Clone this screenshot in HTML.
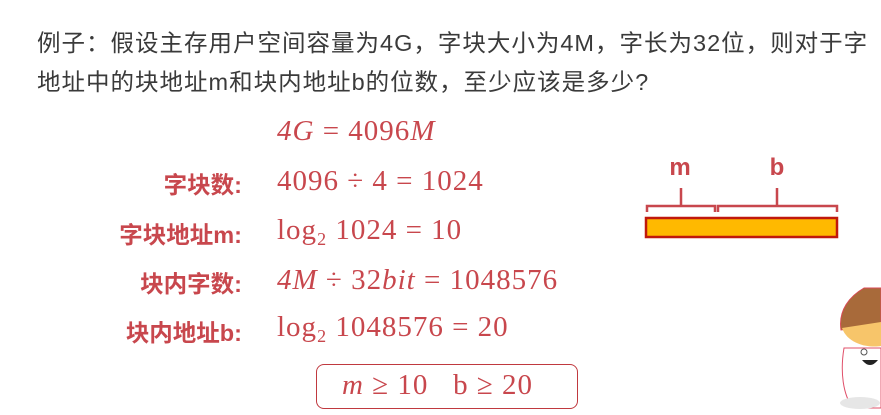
<!DOCTYPE html>
<html><head><meta charset="utf-8"><style>
body{margin:0;width:881px;height:415px;background:#fff;position:relative;overflow:hidden;font-family:"Liberation Sans","Noto Sans CJK SC",sans-serif}
.t{position:absolute;left:37px;font-size:23.5px;letter-spacing:1px;color:#3a3a3a;white-space:nowrap}
.l{position:absolute;right:639px;font-size:23.5px;font-weight:bold;color:#c8474d;white-space:nowrap}
.m{position:absolute;left:277px;font-family:"Liberation Serif","DejaVu Serif",serif;font-size:29px;letter-spacing:1px;color:#c8474d;white-space:nowrap;line-height:33px}
i{font-style:italic}
sub{font-size:18px;vertical-align:-6px}
</style></head><body>
<div class="t" style="top:24px">例子：假设主存用户空间容量为4G，字块大小为4M，字长为32位，则对于字</div>
<div class="t" style="top:63px">地址中的块地址m和块内地址b的位数，至少应该是多少?</div>
<div class="m" style="top:115px"><i>4G</i> = 4096<i>M</i></div>
<div class="l" style="top:166px">字块数:</div>
<div class="m" style="top:165px">4096 ÷ 4 = 1024</div>
<div class="l" style="top:216px">字块地址m:</div>
<div class="m" style="top:214px">log<sub>2</sub> 1024 = 10</div>
<div class="l" style="top:265px">块内字数:</div>
<div class="m" style="top:264px"><i>4M</i> ÷ 32<i>bit</i> = 1048576</div>
<div class="l" style="top:314px">块内地址b:</div>
<div class="m" style="top:311px">log<sub>2</sub> 1048576 = 20</div>
<div style="position:absolute;left:316px;top:364px;width:260px;height:43px;border:1.5px solid #c0393f;border-radius:8px"></div>
<div class="m" style="top:369px;left:342px"><i>m</i> ≥ 10 &nbsp; b ≥ 20</div>
<svg style="position:absolute;left:0;top:0" width="881" height="415">
<text x="680" y="175" font-family="Liberation Sans" font-weight="bold" font-size="24" fill="#c8474d" text-anchor="middle">m</text>
<text x="777" y="175" font-family="Liberation Sans" font-weight="bold" font-size="24" fill="#c8474d" text-anchor="middle">b</text>
<g stroke="#c8474d" stroke-width="2.5" fill="none">
<path d="M647 212V206H715V212"/><path d="M718 212V206H837V212"/>
<path d="M681 188V206M777 188V206"/></g>
<rect x="646" y="218" width="191" height="19" fill="#ffb900" stroke="#c0190c" stroke-width="2.5"/>
<path d="M864 288C850 296 838 310 841 330L881 325V288Z" fill="#a86a3a" stroke="#d94a55"/>
<path d="M842 328C848 345 870 348 881 346V322Z" fill="#f7c56a"/>
<path d="M844 348C840 372 843 395 853 408L881 408V348Z" fill="#fff" stroke="#e0506a"/>
<circle cx="864" cy="352" r="3" fill="none" stroke="#555"/>
<path d="M862 360Q870 370 878 360Z" fill="#222"/>
<ellipse cx="860" cy="403" rx="20" ry="6" fill="#e6e6e6"/>
</svg>
</body></html>
